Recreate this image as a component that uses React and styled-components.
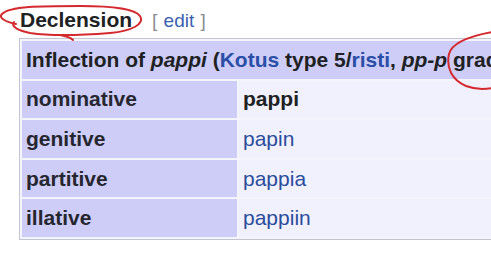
import React from 'react';
import styled, { createGlobalStyle } from 'styled-components';

const GlobalStyle = createGlobalStyle`
  html, body {
    margin: 0;
    padding: 0;
    overflow: hidden;
    background: #ffffff;
  }
  body {
    font-family: "Liberation Sans", Arial, sans-serif;
    color: #202122;
  }
`;

const Page = styled.div`
  position: relative;
  width: 491px;
  height: 258px;
  overflow: hidden;
  padding: 8px 0 0 20px;
  box-sizing: border-box;
`;

const Heading = styled.div`
  display: flex;
  align-items: baseline;
  gap: 20px;
  height: 30px;
`;

const Title = styled.span`
  font-size: 21px;
  font-weight: bold;
  color: #202122;
`;

const EditLink = styled.span`
  font-size: 19px;
  color: #8a8c92;
  word-spacing: 1px;

  a {
    color: #3a5fb0;
    text-decoration: none;
  }
`;

const Table = styled.table`
  margin-left: -1px;
  width: 720px;
  border: 1px solid #c3c5d2;
  border-spacing: 2px;
  border-collapse: separate;
  background: #f4f4fb;
  font-size: 21px;

  td, th {
    padding: 0 4px;
    height: 37.6px;
    text-align: left;
    white-space: nowrap;
  }
`;

const CaptionCell = styled.th`
  background: #cdcdf8;
  font-weight: bold;
  color: #202122;

  a {
    color: #2b4ea6;
    text-decoration: none;
  }
`;

const LabelCell = styled.th`
  width: 207px;
  background: #cdcdf8;
  font-weight: bold;
  color: #26262e;
`;

const ValueCell = styled.td`
  background: #f1f1fd;
  font-weight: ${({ $main }) => ($main ? 'bold' : 'normal')};
  color: ${({ $main }) => ($main ? '#202122' : '#2b4c9b')};
`;

const Marks = styled.svg`
  position: absolute;
  left: 0;
  top: 0;
  pointer-events: none;
`;

const rows = [
  { label: 'nominative', value: 'pappi', main: true },
  { label: 'genitive', value: 'papin' },
  { label: 'partitive', value: 'pappia' },
  { label: 'illative', value: 'pappiin' },
];

const App = () => (
  <>
    <GlobalStyle />
    <Page>
      <Heading>
        <Title>Declension</Title>
        <EditLink>
          [ <a href="#edit">edit</a> ]
        </EditLink>
      </Heading>
      <Table>
        <tbody>
          <tr>
            <CaptionCell colSpan={2}>
              Inflection of <i>pappi</i> (<a href="#kotus">Kotus</a> type 5/
              <a href="#risti">risti</a>, <i>pp-p</i> gradation)
            </CaptionCell>
          </tr>
          {rows.map((r) => (
            <tr key={r.label}>
              <LabelCell>{r.label}</LabelCell>
              <ValueCell $main={r.main}>{r.value}</ValueCell>
            </tr>
          ))}
        </tbody>
      </Table>
      <Marks width="491" height="258" viewBox="0 0 491 258">
        <path
          d="M16 24 C6 22 -2 18 2 14 C10 6 40 6 80 6 C110 6 135 9 140 16 C145 24 132 31 110 33 C85 35 50 36 30 33 C20 31 10 27 14 22 M60 35 C66 36 70 37 73 40"
          fill="none"
          stroke="#d42a2e"
          strokeWidth="2"
          strokeLinecap="round"
        />
        <path
          d="M492 32 C470 36 452 42 449 54 C446 68 452 80 466 86 C474 89 482 90 492 88"
          fill="none"
          stroke="#d42a2e"
          strokeWidth="2"
          strokeLinecap="round"
        />
      </Marks>
    </Page>
  </>
);

export default App;
